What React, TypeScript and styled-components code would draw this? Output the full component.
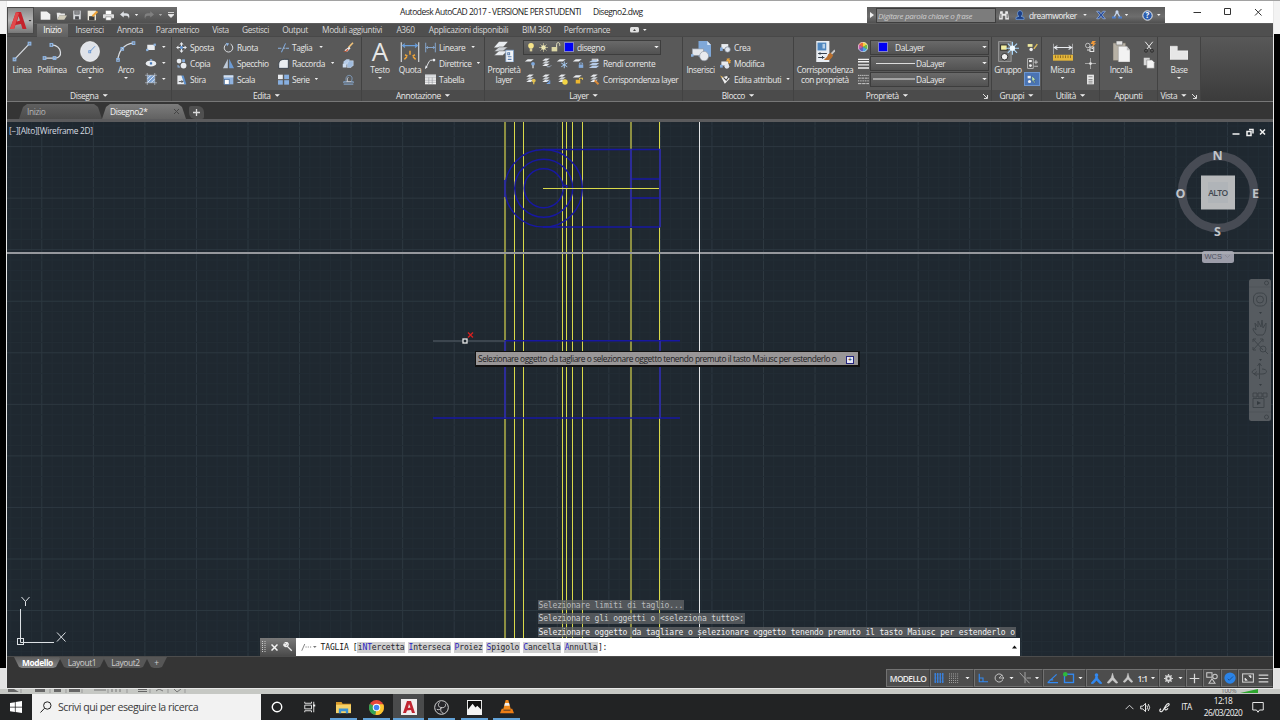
import React from 'react';
import styled, { createGlobalStyle } from 'styled-components';

const UI = '"Open Sans", "Noto Sans", sans-serif';
const MONO = '"DejaVu Sans Mono", "Liberation Mono", monospace';

const GlobalStyle = createGlobalStyle`
  * { box-sizing: border-box; }
  html, body { margin: 0; padding: 0; background: #000; overflow: hidden; }
  body { font-family: ${UI}; font-size: 8.400px; letter-spacing: -0.400px; color: #e8e8e8; }
  svg { display: block; flex: none; }
`;

/* ---------- icons, all on a 16 unit grid ---------- */

const W = '#e9ecf0';
const B = '#8db4e2';
const Y = '#e3c14f';

const layerStack = (
  <>
    <path d="M3 5 7 2h6L9 5z" fill={W} />
    <path d="M3 8.5 7 5.5h6L9 8.5z" fill="#cfd4da" />
    <path d="M3 12 7 9h6L9 12z" fill={W} />
  </>
);

const icons: Record<string, React.ReactNode> = {
  line: <><path d="M2 14 14 2" stroke="#d9dde2" strokeWidth="1" /><g fill="none" stroke={B}><rect x="1" y="13" width="2" height="2" /><rect x="13" y="1" width="2" height="2" /></g></>,
  polyline: <><path d="M2 13h9c5.500 0 5.500-9-3-10" stroke="#d9dde2" fill="none" /><g fill="none" stroke={B}><rect x="1" y="12" width="2" height="2" /><rect x="9" y="12" width="2" height="2" /><rect x="6.500" y="2" width="2" height="2" /></g></>,
  circle: <><circle cx="8" cy="8" r="7.6" fill="#dfe2e8" stroke="#fff" strokeWidth=".5" /><path d="m8 8 4-4" stroke="#5b8fd0" strokeWidth=".7" /><rect x="7" y="7.4" width="1.6" height="1.6" fill="none" stroke="#5b8fd0" strokeWidth=".6" /></>,
  arc: <><path d="M1.5 14.5C2 8 6 2.500 14 1.500" stroke="#d9dde2" fill="none" /><g fill="none" stroke={B} strokeWidth=".9"><rect x=".6" y="13.400" width="2" height="2" /><rect x="4" y="5" width="2" height="2" /><rect x="13" y=".6" width="2" height="2" /></g></>,
  rect: <><rect x="3" y="5" width="10" height="7" fill={W} /><rect x="1.500" y="10.500" width="3" height="3" fill={B} /><rect x="11.500" y="3.500" width="3" height="3" fill={B} /></>,
  ellipse: <><ellipse cx="8" cy="8.500" rx="7" ry="4" fill={W} /><rect x="6.500" y="7" width="3" height="3" fill="#4377b8" /><rect x="6.500" y="3" width="3" height="2" fill={B} /></>,
  hatch: <><rect x="3" y="3" width="10" height="10" fill="#7ba1d2" /><path d="M3 8l5-5M3 13 13 3M8 13l5-5" stroke="#fff" /><path d="M3 0v16M13 0v16M0 3h16M0 13h16" stroke="#c5cedb" strokeWidth=".8" /></>,
  move: <><path d="M8 1v14M1 8h14" stroke={W} strokeWidth="1.600" /><path d="m5 3.500 3-3 3 3M5 12.500l3 3 3-3M3.500 5l-3 3 3 3M12.500 5l3 3-3 3" fill={W} /><rect x="6" y="6" width="4" height="4" fill="#5f92cf" /></>,
  rotate: <><path d="M5 3a6.200 6.200 0 1 0 6 0" fill="none" stroke={W} strokeWidth="1.300" /><path d="m4 1 5 1-3 4z" fill={B} /></>,
  trim: <><path d="M0 9h5M11 9h5" stroke={B} strokeWidth="1.500" /><path d="M5 15 11 2" stroke="#7fa9dd" strokeWidth="1.500" /><path d="M8 9h2" stroke={W} /></>,
  copy: <><circle cx="4.500" cy="4.500" r="3.500" fill={W} /><circle cx="11" cy="11" r="4.200" fill={W} /><rect x="9" y="2" width="4" height="4" fill={B} /><path d="M3 10v3h3" stroke={B} fill="none" strokeWidth="1.500" /></>,
  mirror: <><path d="M7 1v14H0z" fill="#bfcad8" /><path d="M9 1v14h7z" fill="#6d9bd3" /></>,
  fillet: <path d="M1 15V9c0-5 4-7 8-7h6v13z" fill={W} stroke="#1e2a38" />,
  stretch: <><path d="M2 2h6l6 13H2z" fill={W} /><path d="M8 2h3l4 13h-3z" fill="#5f92cf" /><path d="M4 11h6M8 9l2 2-2 2" stroke="#222" fill="none" /></>,
  scale: <><rect x="1" y="2" width="14" height="13" fill="#8fb2df" /><rect x="1" y="2" width="14" height="3" fill="#d5dfec" /><rect x="2" y="8" width="7" height="7" fill="#fff" stroke="#456a9a" /></>,
  array: <><rect x="0" y="1" width="7" height="6.500" fill={W} /><rect x="9" y="1" width="7" height="6.500" fill="#87afe0" /><rect x="0" y="9" width="7" height="6.500" fill="#87afe0" /><rect x="9" y="9" width="7" height="6.500" fill="#87afe0" /></>,
  erase: <><path d="M14.500 1 8 8" stroke="#efc27b" strokeWidth="2.400" /><path d="M9 7 2 12l4 2 5-5z" fill="#e8e8e8" /><path d="M6 10c-1 3-3 4-6 4 3 1 7 0 8-3z" fill="#d2502a" /></>,
  explode: <><path d="M2 6 6 3h4v4L7 10H2z" fill="#b6cbe6" /><path d="M7 8l3-3h5v6l-3 3H7z" fill="#9fbbdd" stroke="#dfe9f5" strokeWidth=".6" /><path d="M1 9h5v5H1z" fill="#cddcf0" /></>,
  offset: <><path d="M1 13V11h4C3 5 6 2 9 2s6 3 3 9h3v2z" fill="none" stroke={B} /><path d="M5 11h7M8 5c-2 0-2 3-1 6" stroke={W} fill="none" /><path d="M1 15h14" stroke={B} /></>,
  dimension: <><path d="M1 1v15M15 1v15" stroke={W} strokeWidth=".8" /><path d="M2 3.500h12M4 2 2 3.500 4 5M12 2l2 1.500L12 5" stroke="#6a9edb" fill="none" strokeWidth=".9" /><path d="M8 7.500v3M3.500 14l2-2M12.500 14l-2-2M4 10.500l2 1M12 10.500l-2 1" stroke="#f0a53a" strokeWidth="1.200" /></>,
  linear: <><path d="M1 1v14M15 1v14" stroke={B} strokeWidth="1.200" /><path d="M2 8h12M4 6 2 8l2 2M12 6l2 2-2 2" stroke={B} fill="none" strokeWidth="1.200" /></>,
  leader: <><path d="M1 15 6 5q1-2 5-2" stroke={W} strokeWidth="1.300" fill="none" /><path d="m0 16 1-5 3 2z" fill={W} /><circle cx="13" cy="3" r="2" fill={W} /></>,
  table: <><rect x="0" y="1" width="16" height="14" fill="#f4f4f4" /><path d="M0 5.500h16M0 9h16M0 12h16M5.500 5v10M10.500 5v10" stroke="#8b8f94" strokeWidth=".8" /><path d="M0 1h16v3H0z" fill="#d4d7da" /></>,
  layerProps: <><path d="M0 5 4 .5h7L7 5z" fill={W} /><path d="M0 8 4 4.500h7L7 8z" fill="#cdd1d6" stroke="#555" strokeWidth=".4" /><path d="M0 11 4 7.500h7L7 11z" fill={W} stroke="#555" strokeWidth=".4" /><rect x="9.500" y="7" width="6" height="9" fill="#f3f5f8" stroke="#7da0cc" strokeWidth=".6" /><path d="M11 9h1.500v1.500H11zM11 12h3M11 14h3" stroke="#5c80b0" strokeWidth=".8" fill="none" /></>,
  layOff: <><path d="M1 6 5 3h8L9 6z" fill={W} /><circle cx="12" cy="9" r="2.500" fill="#7fa9dd" /><path d="M12 11v4" stroke={W} strokeWidth="1.500" /></>,
  layIso: <>{layerStack}<path d="M9 13h4l2-2" stroke="#b2c5e0" fill="none" /></>,
  layFreeze: <><path d="M1 6 5 3h8L9 6z" fill={W} /><path d="M11 6v9M7 8l8 5M15 8l-8 5" stroke="#a8cdf4" strokeWidth="1.300" /></>,
  layLock: <><path d="M1 6 5 3h8L9 6z" fill={W} /><rect x="9" y="10" width="6" height="4.500" fill="#84abdc" /><path d="M10 10V8h4v2" fill="none" stroke={B} /></>,
  layCurrent: <><path d="M1 7 6 4h9l-4 3zM1 11l5-3h9l-4 3zM1 14.500l5-3h9l-4 3z" fill="#b5cbe8" /><path d="M5 3h8v3" stroke={W} fill="none" strokeWidth="1.500" /></>,
  layOn: <>{layerStack}<circle cx="13" cy="10" r="2.500" fill={Y} /><path d="M13 12v3" stroke={Y} strokeWidth="1.600" /></>,
  layUniso: <>{layerStack}<path d="M9 10l4 4M13 10v4H9" stroke="#78a8e6" strokeWidth="1.300" fill="none" /></>,
  layThaw: <>{layerStack}<circle cx="12" cy="12" r="3.600" fill="#f2d444" /></>,
  layUnlock: <><path d="M1 6 5 3h8L9 6z" fill={W} /><rect x="5" y="9" width="6" height="5" fill="#edb72f" /><path d="M10 9V7h4v2" fill="none" stroke={Y} strokeWidth="1.400" /></>,
  layMatch: <>{layerStack}<path d="m9 10 5 5" stroke="#d98938" strokeWidth="2.600" /></>,
  bulb: <><circle cx="8" cy="6" r="4.500" fill="#f8e58a" /><path d="M6 10h4v5H6z" fill="#d9cf9b" /></>,
  sun: <><circle cx="8" cy="8" r="4" fill="#fbf5c5" /><path d="M8 0v16M0 8h16M2.500 2.500l11 11M13.500 2.500l-11 11" stroke="#e6dfa9" strokeWidth="1" /></>,
  unlock: <><rect x="1" y="8" width="9" height="7" fill="#dcd6a4" /><path d="M9 8V4c0-4 5-4 5 0v2" fill="none" stroke="#e9e6c4" strokeWidth="1.600" /></>,
  insert: <><path d="M6 0h7l3 3v9H6z" fill="#7fa8d9" /><path d="M13 0v3h3" fill="#d8e5f5" /><rect x="1" y="6" width="9" height="5" fill="#e4e7ec" stroke="#8b93a0" strokeWidth=".5" /><circle cx="10.500" cy="11.500" r="3.600" fill="#e8eaee" stroke="#8b93a0" strokeWidth=".5" /><rect x="0" y="10" width="2" height="2" fill={B} /></>,
  create: <><rect x="2" y="3" width="10" height="7" fill={W} /><circle cx="11" cy="11" r="4" fill="#dfe5ee" stroke="#757e8b" /><rect x="0" y="8" width="4" height="5" fill="#82a9da" /></>,
  modify: <><rect x="2" y="5" width="10" height="6" fill={W} /><circle cx="10" cy="12" r="3.500" fill="#dfe5ee" /><path d="M13 0v8M9 4h7M10 1l5 6" stroke="#f1a83c" strokeWidth="1.500" /><rect x="0" y="10" width="4" height="4" fill="#82a9da" /></>,
  attributes: <><path d="m2 5 5 9 7-7-4-4z" fill="#efefef" /><path d="m5 5 4 4 5-7" stroke="#444" strokeWidth="1.500" fill="none" /><path d="m0 2 4 2-1 2z" fill="#e6b34c" /></>,
  match: <><rect x="1" y="0" width="10.500" height="16" fill="#e9edf2" /><rect x="2" y="1.200" width="7" height="6" fill="#4f87bf" /><rect x="6" y="2.200" width="2" height="3.500" fill="#b9d2ea" /><path d="M2.500 9.500h7M2.500 12.500h5M4 8.500v2M6 11.500v2" stroke="#39424d" strokeWidth=".8" /><path d="m16 7-4 4" stroke="#c8c8c8" strokeWidth="1.500" /><path d="m12.500 9 2 2c-2 4-5 4-7.500 3 2-1 3-2 3.500-4z" fill="#b9702f" /></>,
  wheel: <><path d="M8 8V0a8 8 0 0 1 7 4z" fill="#f2d23f" /><path d="m8 8 7-4a8 8 0 0 1 0 8z" fill="#6cc04a" /><path d="m8 8 7 4a8 8 0 0 1-7 4z" fill="#4aa3df" /><path d="M8 8v8a8 8 0 0 1-7-4z" fill="#5d62c9" /><path d="M8 8 1 12a8 8 0 0 1 0-8z" fill="#c25aa5" /><path d="M8 8 1 4a8 8 0 0 1 7-4z" fill="#eb6d3b" /><circle cx="8" cy="8" r="7.600" stroke="#f2f2f2" fill="none" /></>,
  weights: <path d="M0 2h16M0 5.500h16M0 10h16M0 14.500h16" stroke="#f1f1f1" strokeWidth="2" />,
  dashes: <g stroke="#e4e4e4" strokeWidth="1.200"><path d="M0 2h16" strokeDasharray="2 1" /><path d="M0 6h16" strokeDasharray="4 1" /><path d="M0 10h16" strokeDasharray="1.500 1" /><path d="M0 14h16" strokeDasharray="5 1" /></g>,
  group: <><rect x=".5" y=".5" width="9.500" height="15" fill="#6c6c6c" stroke="#a5a5a5" strokeWidth=".6" /><rect x="2" y="3" width="5" height="4" fill="#f1eca0" stroke="#222" strokeWidth=".7" /><circle cx="5" cy="12" r="2.500" fill="#f0f0f0" stroke="#222" strokeWidth=".7" /><path d="M11 .5v10M6 5.500h10M7.500 2l7 7M14.500 2l-7 7" stroke="#a9d7fb" strokeWidth=".9" /><circle cx="11" cy="5.500" r="2" fill="#f3fbff" /></>,
  groupEdit: <><rect x="1" y="3" width="7" height="4" fill="#f1eca0" /><circle cx="6" cy="11" r="2.500" fill="#eee" /><path d="m15 3-5 7" stroke="#e0be58" strokeWidth="2" /></>,
  groupAdd: <><rect x="1" y="1" width="8" height="14" fill="none" stroke="#ddd" /><rect x="3" y="3" width="4" height="3" fill="#f4f4f4" /><circle cx="5" cy="11" r="2" fill="#f4f4f4" /><path d="M13 3v6M10.500 6H16M10.500 12H16" stroke="#eee" /></>,
  groupSel: <><path d="M1 3h5v4H1z" fill="#eee" /><circle cx="4" cy="12" r="2.500" fill="#eee" /><path d="m8 3 6 6-3 .5 2 4-1.500.8-2-4L8 12z" fill="#bfe4b4" stroke="#28415f" strokeWidth=".6" /></>,
  measure: <><path d="M0 2v8M16 2v8" stroke={W} strokeWidth=".8" /><path d="M1 5h14M3.500 3.500 1 5l2.500 1.500M12.500 3.500 15 5l-2.500 1.500" stroke={W} fill="none" strokeWidth=".8" /><rect x="0" y="10.500" width="16" height="4.500" fill="#e4b63b" /><path d="M2 11v2M4 11v2M6 11v2M8 11v2M10 11v2M12 11v2M14 11v2" stroke="#79591b" strokeWidth=".6" /></>,
  quick: <><circle cx="5" cy="6" r="3" fill="none" stroke="#ddd" /><path d="M9 0 7 4h3L8 9l6-6h-3l3-3z" fill="#f19a3b" transform="translate(2 0)" /><path d="M8 8h5v6H8zM4 12h4M10 10h2" stroke="#e5e5e5" fill="none" strokeWidth="1.400" /></>,
  point: <><path d="M8 0v16M0 8h16" stroke="#c5c5c5" /><circle cx="8" cy="8" r="2" fill="#e5e5e5" /></>,
  calc: <><rect x="3" y="1" width="10" height="14" fill="#e8e8e8" /><path d="M5 4h6M5 8h6M5 10.500h6M5 13h6" stroke="#666" /></>,
  paste: <><rect x="0" y="1.500" width="12" height="13.500" fill="#b7b1a5" stroke="#6b665d" strokeWidth=".5" /><path d="M3 0h6v3H3z" fill="#e6e6e6" stroke="#555" strokeWidth=".4" /><path d="M5 4h8l3 3v9H5z" fill="#f2f2f2" stroke="#8a8a8a" strokeWidth=".4" /><path d="M13 4v3h3" fill="#c0c0c0" /></>,
  cut: <><path d="m3 1 8 10M13 1 5 11" stroke="#eee" strokeWidth="1.300" /><circle cx="4" cy="13" r="2" fill="none" stroke="#222" /><circle cx="12" cy="13" r="2" fill="none" stroke="#222" /></>,
  copyClip: <><path d="M1 1h8v10H1z" fill="#d8d8d8" /><path d="M5 4h7l3 3v8H5z" fill="#f4f4f4" stroke="#777" strokeWidth=".7" /></>,
  base: <path d="M0 4h6.500v3.500H16V14H0z" fill="#e6e6e6" stroke="#fafafa" strokeWidth=".4" />,
  newFile: <path d="M1 2h9l5 4v8H1z" fill="#f2f2f2" />,
  open: <><path d="M1 4h5l1 1h6v3H5l-3 6z" fill="#e8e8e8" /><path d="M5 8h11l-4 6H2z" fill="#d1cdbb" /></>,
  save: <><path d="M2 1h12v14H2z" fill="#d6d8dc" /><path d="M4 1h8v6H4zM5 10h6v5H5z" fill="#4a4c50" /><path d="M5 3h6M5 5h6" stroke="#eee" /></>,
  saveAs: <><path d="M1 1h12v14H1z" fill="#f0ecdf" /><path d="M3 9h8v6H3z" fill="#3c3c3c" /><path d="m15 2-7 7" stroke="#f0a63a" strokeWidth="3" /></>,
  print: <><path d="M4 1h8v5H4z" fill="#fff" /><rect x="0" y="6" width="16" height="6" rx="1" fill="#dfdfdf" /><path d="M4 10h8v5H4z" fill="#fff" stroke="#555" strokeWidth=".7" /></>,
  undo: <path d="M0 7 6 2v3h4c5 0 6 5 4 9 0-4-2-5-4-5H6v3z" fill="#dcdfe4" />,
  redo: <path d="m16 7-6-5v3H6C1 5 0 10 2 14c0-4 2-5 4-5h4v3z" fill="#808080" />,
  binoculars: <><path d="M2 2h4v4h4V2h4l2 13h-6V9H6v6H0z" fill="#ececec" /><path d="M3 6v7M13 6v7" stroke="#555" strokeWidth="1.500" /></>,
  user: <path d="M8 1c5 0 5 8 1.500 9l5 2v3h-13v-3l5-2C3 9 3 1 8 1z" fill="#1c3f86" stroke="#7db0f2" />,
  exchange: <path d="M1 2h4l3 4 3-4h4l-5 6 5 6h-4l-3-4-3 4H1l5-6z" fill="#274c9c" stroke="#a6c3ee" />,
  a360: <><path d="M8 3 3 12M8 3l5 9" stroke="#c8d8f0" strokeWidth="2" /><circle cx="8" cy="3" r="2.500" fill="#c8d8f0" /><path d="M0 12h6M10 12h6" stroke="#4d80cf" strokeWidth="3" /></>,
  chevron: <path d="m1 11 7-7 7 7" fill="none" stroke="#eee" strokeWidth="1.500" />,
  speaker: <path d="M1 6h3l4-4v12l-4-4H1zM10 5q2 3 0 6M12 3q4 5 0 10" fill="none" stroke="#eee" strokeWidth="1.400" />,
  pen: <path d="M3 10c-3 1-2 5 1 4s4-8 8-11c3-2 4 1 1 3S7 9 9 11s4-2 4-2" fill="none" stroke="#eee" strokeWidth="1.600" />,
  notice: <path d="M1 2h14v10h-5l-2 3-2-3H1z" fill="none" stroke="#eee" strokeWidth="1.300" />,
  win: <path d="m0 2.500 6.500-1V7.500H0zM7.500 1.300 16 0v7.500H7.500zM0 8.500h6.500v6l-6.500-1zM7.500 8.500H16V16l-8.500-1.300z" fill="#fff" />,
  cortana: <circle cx="8" cy="8" r="6.300" fill="none" stroke="#fff" strokeWidth="1.900" />,
  taskview: <g fill="none" stroke="#f0f0f0" strokeWidth="1.200"><path d="M1 1v2h9V1M1 15v-2h9v2M1 5.500h9v5H1zM13 1v14" /><path d="M12 6h3" strokeWidth="2.500" /></g>,
  explorer: <><path d="M0 2h6l1 2h9v3H0z" fill="#d99a2b" /><path d="M0 5h16v9H0z" fill="#f6d268" /><path d="M3 9h10v5h-2.500v-2h-5v2H3z" fill="#3d93d4" /></>,
  chrome: <><circle cx="8" cy="8" r="8" fill="#e8483b" /><path d="M8 8 1 4a8 8 0 0 0 6 12z" fill="#33a553" /><path d="M8 8h8a8 8 0 0 1-9 8z" fill="#fbc62f" /><path d="M8 4.500h7.200A8 8 0 0 1 16 8l-5 2z" fill="#fbc62f" /><circle cx="8" cy="8" r="4" fill="#fff" /><circle cx="8" cy="8" r="3" fill="#4384f3" /></>,
  autocad: <><rect x="0" y="0" width="16" height="16" fill="#f1eeee" /><path d="M2 14 6 2h4l4 12h-3l-1-3-4 .5L5 14zM7 9l2.500-.5L8 5z" fill="#c02430" /></>,
  obs: <><circle cx="8" cy="8" r="7.300" fill="#26262a" stroke="#ddd" /><path d="M8 8C4 8 4 4 6 2.500M8 8c4 1 5-3 4-4M8 8c-2 3 0 6 2 6M3 10c2 1 4 0 5-2" stroke="#d4d4d4" fill="none" /></>,
  photos: <><rect width="16" height="16" fill="#f4f4f4" /><path d="M1 1h14v9l-4-4-2 2-3-4-5 6z" fill="#111" /></>,
  vlc: <><path d="M6.500 0h3l3 11h-9z" fill="#f28a1c" /><path d="M5.700 3.500h4.600l.8 3H4.900z" fill="#eee" /><path d="m2 10-2 5h16l-2-5h-2v2H4v-2z" fill="#ee7d14" /></>,
  grid: <><path d="M2 0v16M6 0v16M10 0v16M14 0v16" stroke="#3a86e8" strokeWidth="2" /><path d="M0 2h16M0 8h16M0 14h16" stroke="#3a86e8" strokeWidth=".8" opacity=".6" /></>,
  snap: <g stroke="#bcbcbc" strokeWidth="1.400" strokeDasharray="1.400 1.900"><path d="M0 1.500h16M0 5h16M0 8.500h16M0 12h16M0 15.300h16" /></g>,
  ortho: <path d="M2 1v13h14M2 8h6v6" fill="none" stroke="#3389f0" strokeWidth="1.800" />,
  polar: <><path d="M14 5a6.500 6.500 0 1 0 0 6" fill="none" stroke="#c9c9c9" strokeWidth="1.500" /><path d="M8 8h8M8 8l5-5M13 5.500 16 8l-3 2.500" fill="none" stroke="#c9c9c9" strokeWidth="1.300" /></>,
  iso: <path d="M1 1l13 14M8 0v15M10 8h6" fill="none" stroke="#a4a4a4" strokeWidth="1.300" />,
  track: <path d="M1 14 14 2M1 14h15M4 10h5" fill="none" stroke="#3389f0" strokeWidth="1.700" />,
  osnap: <><rect x="2" y="3" width="12" height="11" fill="none" stroke="#3389f0" strokeWidth="1.800" /><circle cx="3" cy="3" r="3" fill="#2dba3b" /></>,
  annoB: <><circle cx="8" cy="3" r="2.600" fill="#3389f0" /><path d="M8 2 6 8 0 15l3 .5 5-5 5 5 3-.5-6-7z" fill="#3389f0" stroke="#3389f0" /></>,
  anno: <path d="M8 0 6 7 0 14l3 1 5-5 5 5 3-1-6-7z" fill="#c8c8c8" stroke="#c8c8c8" strokeWidth=".6" />,
  gear: <><circle cx="8" cy="8" r="4" fill="none" stroke="#d4d4d4" strokeWidth="3.500" /><path d="M8 0v3M8 13v3M0 8h3M13 8h3M2.500 2.500l2 2M11.500 11.500l2 2M13.500 2.500l-2 2M2.500 13.500l2-2" stroke="#d4d4d4" strokeWidth="2.200" /></>,
  plus: <path d="M8 1v14M1 8h14" stroke="#d9d9d9" strokeWidth="1.800" />,
  isolate: <g fill="none" stroke="#c9c9c9" strokeWidth="1.400"><rect x="1" y="1" width="7" height="6" /><circle cx="12" cy="6" r="3" /><path d="m8 9 4 6H4z" /></g>,
  hardware: <><circle cx="8" cy="8" r="7.500" fill="#2b83e6" /><path d="m5 9 2 2 5-5" stroke="#174f94" strokeWidth="1.300" fill="none" /></>,
  clean: <><rect x=".8" y="2.500" width="14.400" height="11" fill="none" stroke="#d0d0d0" strokeWidth="1.400" /><path d="M4 11v-3l3 3zM12 5v3L9 5z" fill="#e0e0e0" stroke="#e0e0e0" /></>,
  menu: <path d="M1 3h14M1 8h14M1 13h14" stroke="#d6d6d6" strokeWidth="1.800" />,
  wrench: <path d="m14 14-7-7M2 3l2 2 2-2-2-2c3-1 5 2 4 4L6 7C3 8 0 5 2 3z" fill="none" stroke="#eee" strokeWidth="2.200" />,
  prompt: <path d="m1 13 4-9M6 8h1.500M9 8h1.500M12 8h1.500" stroke="#777" fill="none" strokeWidth="1.200" />,
};

const Icon = ({ name, size = 12, h }: { name: string; size?: number; h?: number }) => (
  <svg width={size} height={h ?? size} viewBox="0 0 16 16" preserveAspectRatio={h ? 'none' : 'xMidYMid meet'}>{icons[name]}</svg>
);

const Caret = styled.i<{ $m?: string; $s?: number; $c?: string }>`
  width: ${(p) => (p.$s ?? 2.2) * 2}px;
  height: ${(p) => p.$s ?? 2.2}px;
  flex: none;
  margin: ${(p) => p.$m ?? '0'};
  background: ${(p) => p.$c ?? '#f0f0f0'};
  clip-path: polygon(0 0, 100% 0, 50% 100%);
`;

/* ---------- frame ---------- */

const Desktop = styled.div`
  width: 1280px;
  height: 720px;
  display: flex;
  flex-direction: column;
  overflow: hidden;
  background: #000;
`;
const TopEdge = styled.div`height: 1px; flex: none; background: #a2a2a2;`;
const Middle = styled.div`height: 688px; flex: none; display: flex;`;
const Gutter = styled.div`
  width: 6px;
  background: linear-gradient(#f3f3f3 0 33px, #000 33px 667px, #e3e3e3 667px);
`;
const Window = styled.div`
  position: relative;
  width: 1268px;
  display: flex;
  flex-direction: column;
  border: solid #e8e8e8;
  border-width: 0 1px 1px 1px;
  background: #353535;
`;

/* ---------- title bar ---------- */

const TitleBar = styled.div`
  height: 22px;
  flex: none;
  display: flex;
  align-items: flex-end;
  background: #fff;
`;
const AppButton = styled.div`
  position: absolute;
  left: 0;
  top: 6px;
  width: 27px;
  height: 27px;
  display: flex;
  align-items: center;
  padding-left: 2px;
  border: 1px solid #4a4a4a;
  background: linear-gradient(#8a8a8a, #b5b5b5 50%, #777);
`;
const QuickBar = styled.div`
  width: 170px;
  height: 16px;
  padding-left: 32px;
  display: flex;
  align-items: center;
  background: linear-gradient(#6d6d6d, #505050);
`;
const QuickItem = styled.div<{ $w: number }>`
  width: ${(p) => p.$w}px;
  flex: none;
  display: flex;
  justify-content: center;
`;
const Title = styled.div`
  width: 690px;
  height: 22px;
  padding-left: 223px;
  display: flex;
  gap: 12px;
  line-height: 21px;
  font-size: 8.500px;
  letter-spacing: -0.490px;
  color: #1b1b1b;
  white-space: nowrap;
`;
const InfoBar = styled.div`
  width: 298px;
  height: 16px;
  display: flex;
  align-items: center;
  background: linear-gradient(#5c5c5c, #6d6d6d 60%, #505050);
`;
const InfoArrow = styled.div`
  width: 9px;
  display: flex;
  justify-content: center;
`;
const Search = styled.div`
  width: 120px;
  height: 15px;
  padding-left: 1px;
  line-height: 13px;
  border: 1px solid #3e3e3e;
  background: #7c7c7c;
  color: #cfcfcf;
  font-size: 8px;
  letter-spacing: -0.330px;
  font-style: italic;
  white-space: nowrap;
  overflow: hidden;
`;
const InfoUser = styled.div`width: 53px; color: #f0f0f0; letter-spacing: -0.500px;`;
const WindowButtons = styled.svg`margin-left: auto;`;

/* ---------- ribbon ---------- */

const TabRow = styled.div`
  height: 14px;
  flex: none;
  display: flex;
  padding-left: 30px;
  background: #4f4f4f;
  border-top: 1px solid #5e5e5e;
  border-bottom: 1px solid #484848;
`;
const RibbonTab = styled.div<{ $w: number; $on?: boolean }>`
  width: ${(p) => p.$w}px;
  height: 13px;
  line-height: 12px;
  text-align: center;
  white-space: nowrap;
  color: ${(p) => (p.$on ? '#fff' : '#d8d8d8')};
  background: ${(p) => (p.$on ? 'linear-gradient(#757575, #606060)' : 'none')};
`;
const RibbonToggle = styled.div`
  display: flex;
  align-items: center;
  margin-left: 13px;
`;
const Ribbon = styled.div`
  height: 65px;
  flex: none;
  display: flex;
  background: linear-gradient(#585858, #3b3b3b);
  border-bottom: 1px solid #777;
`;
const PanelBox = styled.div<{ $w: number }>`
  width: ${(p) => p.$w}px;
  flex: none;
  display: flex;
  flex-direction: column;
  background: #595959;
  border-right: 1px solid #424242;
`;
const PanelBody = styled.div<{ $pl?: number }>`
  height: 53px;
  display: flex;
  padding: 2px 0 0 ${(p) => p.$pl ?? 0}px;
`;
const PanelTitle = styled.div<{ $pr: number }>`
  position: relative;
  height: 11px;
  padding-right: ${(p) => p.$pr}px;
  display: flex;
  align-items: center;
  justify-content: center;
  gap: 4px;
  background: #4b4b4b;
  line-height: 11px;
  white-space: nowrap;
`;
const Launcher = styled.svg`
  position: absolute;
  right: 3px;
  top: 4px;
`;
const BigBox = styled.div<{ $w: number }>`
  width: ${(p) => p.$w}px;
  flex: none;
  display: flex;
  flex-direction: column;
  align-items: center;
  padding-top: 2px;
`;
const BigLabel = styled.div`
  margin-top: 3px;
  line-height: 10px;
  text-align: center;
  white-space: pre;
`;
const LetterA = styled.div`
  height: 21px;
  line-height: 21px;
  font-size: 26px;
  letter-spacing: 0;
  color: #e6e6e6;
`;
const Column = styled.div<{ $w?: number }>`
  ${(p) => (p.$w ? `width: ${p.$w}px;` : '')}
  flex: none;
  display: flex;
  flex-direction: column;
`;
const Row = styled.div<{ $gap?: number }>`
  height: 16px;
  display: flex;
  align-items: center;
  gap: ${(p) => p.$gap ?? 2}px;
  white-space: nowrap;
`;
const IconSlot = styled.div<{ $w?: number; $on?: boolean }>`
  width: ${(p) => p.$w ?? 14}px;
  height: 14px;
  flex: none;
  display: flex;
  align-items: center;
  justify-content: center;
  background: ${(p) => (p.$on ? '#4a74b4' : 'none')};
  outline: ${(p) => (p.$on ? '1px solid #6d96d0' : 'none')};
  outline-offset: -1px;
`;
const Select = styled.div<{ $w: number }>`
  width: ${(p) => p.$w}px;
  height: 15px;
  display: flex;
  align-items: center;
  padding: 0 1px 0 2px;
  border: 1px solid #3d3d3d;
  background: linear-gradient(#696969, #525252);
  white-space: nowrap;
`;
const Swatch = styled.span<{ $m: string }>`
  width: 10px;
  height: 10px;
  margin: ${(p) => p.$m};
  background: #0000f4;
  border: 1px solid #8484c8;
`;
const LinePreview = styled.span<{ $w: number; $h: number; $m: number; $c: string }>`
  width: ${(p) => p.$w}px;
  height: ${(p) => p.$h}px;
  margin: 0 1px 0 ${(p) => p.$m}px;
  background: ${(p) => p.$c};
`;

const Panel = ({ w, title, pl, caret = true, launcher, children }: { w: number; title: string; pl?: number; caret?: boolean; launcher?: boolean; children: React.ReactNode }) => (
  <PanelBox $w={w}>
    <PanelBody $pl={pl}>{children}</PanelBody>
    <PanelTitle $pr={launcher ? 11 : 0}>
      {title}
      {caret && <Caret $s={2.7} />}
      {launcher && <Launcher width="5" height="5" viewBox="0 0 5 5"><path d="M0 0l4 4M4.500 1v3.500H1" stroke="#ddd" fill="none" /></Launcher>}
    </PanelTitle>
  </PanelBox>
);

const Big = ({ w, icon, label, caret, size = 20 }: { w: number; icon: string; label: string; caret?: boolean; size?: number }) => (
  <BigBox $w={w}>
    {icon === 'text' ? <LetterA>A</LetterA> : <Icon name={icon} size={size} h={21} />}
    <BigLabel>{label}</BigLabel>
    {caret && <Caret $m="2px 0 0 0" $s={2} />}
  </BigBox>
);

const Tool = ({ icon, label, caret, size = 11 }: { icon: string; label?: string; caret?: string; size?: number }) => (
  <Row>
    <IconSlot><Icon name={icon} size={size} /></IconSlot>
    {label && <span>{label}</span>}
    {caret && <Caret $m={caret} $s={1.8} />}
  </Row>
);

/* ---------- document tabs ---------- */

const DocTabs = styled.div`
  height: 20px;
  flex: none;
  display: flex;
  align-items: flex-end;
  padding-left: 12px;
  background: #353535;
  border-bottom: 3px solid #5b5b5d;
`;
const DocTab = styled.div<{ $w: number; $on?: boolean }>`
  width: ${(p) => p.$w}px;
  height: 15px;
  padding: 0 7px 0 8px;
  display: flex;
  align-items: center;
  justify-content: space-between;
  clip-path: polygon(0 100%, 4px 3px, 8px 0, calc(100% - 8px) 0, calc(100% - 4px) 3px, 100% 100%);
  background: ${(p) => (p.$on ? 'linear-gradient(#7c7c7c, #626262)' : 'linear-gradient(#5f5f5f, #4c4c4c)')};
  color: ${(p) => (p.$on ? '#f4f4f4' : '#b5b5b5')};
`;
const PlusTab = styled.div`
  width: 15px;
  height: 13px;
  margin-left: 3px;
  display: flex;
  align-items: center;
  justify-content: center;
  border-radius: 2px 6px 2px 6px;
  background: #505050;
`;

/* ---------- viewport ---------- */

const Viewport = styled.div`
  position: relative;
  height: 534px;
  flex: none;
  overflow: hidden;
  background: #1f2830;
`;
const ViewLabel = styled.div`
  position: absolute;
  left: 2px;
  top: 3px;
  line-height: 12px;
  font-size: 8.400px;
  letter-spacing: -0.320px;
  color: #d6dbe0;
  white-space: pre;
`;
const Tooltip = styled.div`
  position: absolute;
  left: 468px;
  top: 229px;
  width: 385px;
  height: 16px;
  padding: 0 4px 0 2px;
  display: flex;
  align-items: center;
  justify-content: space-between;
  border: 1px solid #111;
  border-right-width: 2px;
  border-bottom-width: 2px;
  background: #999697;
  color: #1d1d1f;
  letter-spacing: -0.430px;
  white-space: nowrap;
`;
const TipKey = styled.span`
  width: 8px;
  height: 8px;
  margin-top: 3px;
  border: 1px solid #23237c;
  background: #e6e6f4;
  font-size: 7px;
  letter-spacing: 0;
  line-height: 5px;
  text-align: center;
  color: #111;
`;
const History = styled.div`
  position: absolute;
  left: 530.500px;
  top: 478px;
  display: flex;
  flex-direction: column;
  align-items: flex-start;
  gap: 3px;
`;
const HistoryLine = styled.div<{ $c: string }>`
  height: 10.300px;
  padding: 0 1px;
  line-height: 11px;
  background: rgba(98, 100, 103, 0.780);
  color: ${(p) => p.$c};
  font-family: ${MONO};
  font-size: 8px;
  letter-spacing: -0.146px;
  white-space: pre;
`;
const CommandBar = styled.div`
  position: absolute;
  left: 253px;
  top: 516px;
  width: 760px;
  height: 18px;
  display: flex;
  background: #fff;
`;
const CommandGrip = styled.div`
  width: 36px;
  display: flex;
  align-items: center;
  gap: 5px;
  padding-left: 2px;
  background: linear-gradient(#7a7a7a, #4a4a4a);
`;
const CommandText = styled.div`
  flex: 1;
  display: flex;
  align-items: center;
  padding: 0 3px 0 5px;
  font-family: ${MONO};
  font-size: 8px;
  letter-spacing: -0.146px;
  color: #151515;
  white-space: pre;
`;
const Verb = styled.span`margin: 0 4px 0 4px;`;
const Option = styled.span`
  margin-right: 3px;
  line-height: 11px;
  padding: 0 0.500px;
  background: #cfcfcf;
  color: #26262e;
  &:last-of-type { margin-right: 0; }
  & b { font-weight: 400; color: #2a1fc4; }
`;
const Expand = styled.svg`margin-left: auto;`;

/* ---------- bottom bars ---------- */

const LayoutTabs = styled.div`
  height: 13px;
  flex: none;
  display: flex;
  padding-left: 7px;
  border-top: 1px solid #4c4c4c;
`;
const LayoutTab = styled.div<{ $w: number; $on?: boolean }>`
  width: ${(p) => p.$w}px;
  height: 11px;
  line-height: 11px;
  margin-right: -2px;
  text-align: center;
  clip-path: polygon(0 0, 100% 0, calc(100% - 5px) 90%, calc(100% - 8px) 100%, 8px 100%, 5px 90%);
  background: ${(p) => (p.$on ? 'linear-gradient(#5c5c5c, #868686)' : '#565656')};
  color: ${(p) => (p.$on ? '#fff' : '#cecece')};
  font-weight: ${(p) => (p.$on ? 700 : 400)};
`;
const StatusRow = styled.div`
  height: 18px;
  display: flex;
  justify-content: flex-end;
`;
const StatusCell = styled.div<{ $w: number }>`
  width: ${(p) => p.$w}px;
  height: 18px;
  flex: none;
  display: flex;
  align-items: center;
  background: #4d4d4d;
  border: 1px solid #727272;
  border-right-color: #3c3c3c;
  font-size: 8.400px;
  font-weight: 600;
  letter-spacing: -0.650px;
  color: #ececec;
  white-space: nowrap;
`;
const StatusItem = styled.div<{ $w: number }>`
  width: ${(p) => p.$w}px;
  display: flex;
  flex: none;
  justify-content: center;
`;
const BackStrip = styled.div`
  height: 5px;
  flex: none;
  display: flex;
  justify-content: space-between;
  overflow: hidden;
  background: #c6c8c4;
`;
const Remnant = styled.div`
  width: 59px;
  display: flex;
  gap: 4px;
  font-size: 6.500px;
  letter-spacing: -0.300px;
  line-height: 4px;
  color: #666;
`;

/* ---------- taskbar ---------- */

const Taskbar = styled.div`
  height: 26px;
  flex: none;
  display: flex;
  background: #222324;
`;
const Start = styled.div`width: 32px; display: flex; align-items: center; justify-content: center;`;
const TaskSearch = styled.div`
  width: 229px;
  display: flex;
  align-items: center;
  gap: 6px;
  padding-left: 8px;
  background: #f2f2f2;
  color: #3a3a3a;
  font-size: 10.600px;
  letter-spacing: -0.470px;
  white-space: nowrap;
`;
const TaskItem = styled.div<{ $w: number; $bar?: boolean; $on?: boolean }>`
  width: ${(p) => p.$w}px;
  display: flex;
  align-items: center;
  justify-content: center;
  background-color: ${(p) => (p.$on ? '#4a4b4c' : 'transparent')};
  background-image: ${(p) => (p.$bar ? 'linear-gradient(#62a2d8, #62a2d8)' : 'none')};
  background-size: ${(p) => (p.$on ? '100%' : '27px')} 2px;
  background-position: bottom center;
  background-repeat: no-repeat;
`;
const Tray = styled.div`
  margin-left: auto;
  width: 161px;
  display: flex;
  align-items: center;
  color: #f2f2f2;
  font-size: 8.300px;
  letter-spacing: -0.560px;
`;
const TrayItem = styled.div<{ $w: number }>`
  width: ${(p) => p.$w}px;
  display: flex;
  justify-content: center;
  text-align: center;
  line-height: 12px;
`;

/* ---------- the drawing ---------- */

const yellow = '#d9d94a';
const blue = '#1717a2';

const Drawing = () => {
  const cols = Array.from({ length: 124 }, (_, i) => i - 3);
  const rows = Array.from({ length: 54 }, (_, i) => i - 2);
  return (
    <svg width="1266" height="534" viewBox="7 122 1266 534">
      {cols.map((i) => <path key={`c${i}`} d={`M${41.8 + i * 10.31} 122v534`} stroke={i % 5 === 0 ? '#2d3840' : '#232d35'} strokeWidth="1" />)}
      {rows.map((i) => <path key={`r${i}`} d={`M7 ${146.6 + i * 10.31}h1266`} stroke={i % 5 === 0 ? '#2d3840' : '#232d35'} strokeWidth="1" />)}
      <g stroke={yellow}>
        {[514.5, 523.5, 562.5, 566.5, 572.5, 582.5, 659.5].map((x) => <path key={x} d={`M${x} 122v534`} />)}
      </g>
      <g stroke="#8d8f42" strokeWidth="2"><path d="M505 122v58M505 197v143M505 419v237M631 122v27M631 228v428" /></g>
      <g stroke={blue} fill="none" strokeWidth="1.500">
        <circle cx="543.700" cy="188.300" r="38.700" />
        <circle cx="543.700" cy="188.300" r="29" />
        <circle cx="543.700" cy="188.300" r="19.500" />
        <path d="M562 186c5-2 7 1 3 3" />
        <path d="M543 149.500h117M543 227h117M631 179h29M631 198h29M505 340.800h175M433 418h247" />
      </g>
      <g stroke="#2c2c98" strokeWidth="2"><path d="M660 149v78M660 341v77M505 341v77M631 149v78M505 180v17" /></g>
      <path d="M543 188.500h116" stroke={yellow} />
      <path d="M433 341h72" stroke="#47515a" strokeWidth="1.500" />
      <path d="M7 253h1266" stroke="#96989d" strokeWidth="2" />
      <path d="M699.500 122v534" stroke="#e4e6e8" />
      <rect x="463" y="339" width="4" height="4" fill="#1f2830" stroke="#e6e6e6" strokeWidth="1.300" />
      <path d="m468 332.500 5 5M473 332.500l-5 5" stroke="#d31f1f" strokeWidth="1.400" />

      <g stroke="#dce0e4" fill="none">
        <path d="M20.500 609v33.500h33.500" />
        <rect x="17.500" y="638.500" width="6" height="6" />
      </g>
      <path d="m57 632.500 8.500 9M65.500 632.500l-8.500 9M21.500 597l4 4.500 4-4.500M25.500 601.500v4.500" stroke="#dce0e4" fill="none" />

      <g stroke="#f2f2f2" fill="none" strokeWidth="1.500">
        <path d="M1232.500 134h7M1247 131.500h4v4h-4zM1249 129.500h4v4M1260 129.500l5 5M1265 129.500l-5 5" />
      </g>

      <circle cx="1218" cy="192" r="36" fill="none" stroke="#474b54" strokeWidth="8.500" />
      <rect x="1201" y="175.500" width="34" height="34" fill="#b7b9bb" />
      <rect x="1208" y="182" width="20" height="21" fill="#b0b4b8" />
      <g fontFamily="Open Sans" textAnchor="middle" fontWeight="700" fontSize="12.500" letterSpacing="0" fill="#c0c4c9">
        <text x="1217.500" y="160">N</text>
        <text x="1217.500" y="235.500">S</text>
        <text x="1180.500" y="197.500">O</text>
        <text x="1255.500" y="197.500">E</text>
      </g>
      <text x="1218" y="195.500" fontFamily="Open Sans" textAnchor="middle" fontSize="8.500" letterSpacing="-0.600" fontWeight="600" fill="#41474f">ALTO</text>
      <rect x="1202" y="251" width="32" height="12" rx="2.500" fill="#9c9da9" />
      <text x="1204.500" y="259" fontFamily="Liberation Sans" fontSize="7.500" letterSpacing="0" fill="#4f525e">WCS</text>
      <path d="m1225 255 2.500 2.500 2.500-2.500" fill="none" stroke="#8b8d98" />
      <path d="M1202 253h32" stroke="#a9abb3" strokeWidth="2" />

      <rect x="1249" y="279" width="22" height="142" rx="2.500" fill="#565b60" />
      <path d="M1249 287h22M1249 412h22" stroke="#4f5459" />
      <g fill="none" stroke="#3e4449">
        <circle cx="1266.500" cy="283" r="2" />
        <rect x="1253.500" y="293" width="13" height="13" rx="5" />
        <circle cx="1260" cy="299.500" r="3.500" />
        <path d="M1256 334c-5-6-3-7 0-4l-1-7 3 4v-6l3 6 1-7 1 8 3-5c0 5 0 9-3 12h-6z" />
        <path d="m1253 339 10 11M1263 339l-10 11M1253 342v-3h3M1260 339h3v3M1253 347v3h3" />
        <circle cx="1263" cy="349" r="3" /><path d="m1265 351 3 3" />
        <path d="M1259.500 363v16M1257.500 366l2-3 2 3M1262 369c6 0 6 5 0 5h-6c-6 0-4-4 0-5M1257 371.500l-3 2.500 3 2" />
        <path d="M1253 393h4v4h-4zM1258 393h4v4h-4zM1263 393h4v4h-4zM1253 398.500h11v9h-11z" />
        <circle cx="1266.500" cy="417" r="2" />
      </g>
      <path d="m1257 401 4 2-4 2zM1259 312h3l-1.500 2zM1259 359h3l-1.500 2zM1259 384h3l-1.500 2z" fill="#353b40" />
    </svg>
  );
};

const tabs: [string, number, boolean?][] = [
  ['Inizio', 31, true], ['Inserisci', 43], ['Annota', 38], ['Parametrico', 57], ['Vista', 29], ['Gestisci', 41], ['Output', 38],
  ['Moduli aggiuntivi', 76], ['A360', 31], ['Applicazioni disponibili', 95], ['BIM 360', 41], ['Performance', 60],
];

const options: [string, string, string][] = [
  ['i', 'NT', 'ercetta'], ['', 'I', 'nterseca'], ['', 'P', 'roiez'], ['', 'S', 'pigolo'], ['', 'C', 'ancella'], ['', 'A', 'nnulla'],
];

const App = () => (
  <Desktop>
    <GlobalStyle />
    <TopEdge />
    <Middle>
      <Gutter />
      <Window>
        <TitleBar>
          <QuickBar>
            <QuickItem $w={13}><Icon name="newFile" size={11} /></QuickItem>
            <QuickItem $w={18}><Icon name="open" size={11} /></QuickItem>
            <QuickItem $w={14}><Icon name="save" size={10} /></QuickItem>
            <QuickItem $w={17}><Icon name="saveAs" size={11} /></QuickItem>
            <QuickItem $w={15}><Icon name="print" size={11} /></QuickItem>
            <QuickItem $w={17}><Icon name="undo" size={10} /></QuickItem>
            <QuickItem $w={7}><Caret $s={1.8} /></QuickItem>
            <QuickItem $w={17}><Icon name="redo" size={10} /></QuickItem>
            <QuickItem $w={7}><Caret $c="#aaa" $s={1.8} /></QuickItem>
            <QuickItem $w={13}><svg width="6" height="6" viewBox="0 0 6 6"><path d="M0 .5h6M0 2.500h6L3 5.500z" fill="#eee" stroke="#eee" strokeWidth=".8" /></svg></QuickItem>
          </QuickBar>
          <Title><span>Autodesk AutoCAD 2017 - VERSIONE PER STUDENTI</span><span>Disegno2.dwg</span></Title>
          <InfoBar>
            <InfoArrow><svg width="4" height="6"><path d="M0 0v6l4-3z" fill="#f0f0f0" /></svg></InfoArrow>
            <Search>Digitare parola chiave o frase</Search>
            <QuickItem $w={16}><Icon name="binoculars" size={10} /></QuickItem>
            <QuickItem $w={16}><Icon name="user" size={10} /></QuickItem>
            <QuickItem $w={1} />
            <InfoUser>dreamworker</InfoUser>
            <QuickItem $w={6}><Caret $s={1.8} /></QuickItem>
            <QuickItem $w={25}><Icon name="exchange" size={10} /></QuickItem>
            <QuickItem $w={8}><Icon name="a360" size={10} /></QuickItem>
            <QuickItem $w={11}><Caret $s={1.8} /></QuickItem>
            <QuickItem $w={31}>
              <svg width="11" height="11" viewBox="0 0 11 11"><circle cx="5.500" cy="5.500" r="4.700" fill="#2b5cae" stroke="#eee" /><text x="5.500" y="8.300" fontSize="8" fontWeight="700" letterSpacing="0" fill="#fff" textAnchor="middle" fontFamily="Open Sans">?</text></svg>
            </QuickItem>
            <Caret $m="0 0 0 -6px" $s={1.8} />
          </InfoBar>
          <WindowButtons width="108" height="22" viewBox="1165 1 108 22"><path d="M1193.500 12.500h7.500M1224.500 8.500h6v6h-6zM1255 9l6.500 6.500M1261.500 9l-6.500 6.500" fill="none" stroke="#333" /></WindowButtons>
        </TitleBar>

        <TabRow>
          {tabs.map(([label, w, on]) => <RibbonTab key={label} $w={w} $on={on}>{label}</RibbonTab>)}
          <RibbonToggle>
            <svg width="9" height="6" viewBox="0 0 9 6"><rect width="9" height="5.500" rx="1.500" fill="#e2e2e2" /><path d="M3 4h3L4.500 2z" fill="#444" /></svg>
            <Caret $m="0 0 0 4px" $s={1.8} />
          </RibbonToggle>
        </TabRow>

        <AppButton>
          <svg width="17" height="20" viewBox="0 0 17 20"><path d="M0 18 6 1h5l5.500 17h-4L11 13l-5.500 1L4 18zM7 10.500l3-1L8.500 5z" fill="#c4232b" /><path d="M0 18 6 1l3 1-5 16z" fill="#e2494b" /></svg>
          <Caret $m="0 0 0 1px" $s={2} $c="#222" />
        </AppButton>

        <Ribbon>
          <Panel w={165} title="Disegna">
            <Big w={30} icon="line" label="Linea" />
            <Big w={30} icon="polyline" label="Polilinea" />
            <Big w={46} icon="circle" label="Cerchio" caret />
            <Big w={26} icon="arc" label="Arco" caret />
            <Column $w={32}>
              {['rect', 'ellipse', 'hatch'].map((n) => (
                <Row key={n}><IconSlot $w={24}><Icon name={n} size={12} /></IconSlot><Caret $m="0 0 0 -3px" $s={1.8} /></Row>
              ))}
            </Column>
          </Panel>

          <Panel w={190} title="Edita" pl={2}>
            <Column $w={47}><Tool icon="move" label="Sposta" /><Tool icon="copy" label="Copia" /><Tool icon="stretch" label="Stira" /></Column>
            <Column $w={55}><Tool icon="rotate" label="Ruota" /><Tool icon="mirror" label="Specchio" /><Tool icon="scale" label="Scala" /></Column>
            <Column $w={65}><Tool icon="trim" label="Taglia" caret="0 0 0 5px" /><Tool icon="fillet" label="Raccorda" caret="0 0 0 4px" /><Tool icon="array" label="Serie" caret="0 0 0 3px" /></Column>
            <Column><Tool icon="erase" /><Tool icon="explode" size={12} /><Tool icon="offset" /></Column>
          </Panel>

          <Panel w={123} title="Annotazione" pl={1}>
            <Big w={34} icon="text" label="Testo" caret />
            <Big w={26} icon="dimension" label="Quota" />
            <Column><Tool icon="linear" label="Lineare" caret="0 0 0 4px" /><Tool icon="leader" label="Direttrice" caret="0 0 0 3px" /><Tool icon="table" label="Tabella" /></Column>
          </Panel>

          <Panel w={198} title="Layer">
            <Big w={38} icon="layerProps" label={'Proprietà\nlayer'} />
            <Column>
              <Row>
                <Select $w={138}>
                  <IconSlot $w={10}><Icon name="bulb" size={10} /></IconSlot>
                  <IconSlot $w={15}><Icon name="sun" size={9} /></IconSlot>
                  <IconSlot $w={10}><Icon name="unlock" size={10} /></IconSlot>
                  <Swatch $m="0 3px 0 3px" />
                  disegno
                  <Caret $m="0 0 0 auto" $s={2.5} />
                </Select>
              </Row>
              <Row>
                {['layOff', 'layIso', 'layFreeze', 'layLock', 'layCurrent'].map((n) => <IconSlot key={n}><Icon name={n} size={12} /></IconSlot>)}
                Rendi corrente
              </Row>
              <Row>
                {['layOn', 'layUniso', 'layThaw', 'layUnlock', 'layMatch'].map((n) => <IconSlot key={n}><Icon name={n} size={12} /></IconSlot>)}
                Corrispondenza layer
              </Row>
            </Column>
          </Panel>

          <Panel w={111} title="Blocco">
            <Big w={35} icon="insert" label="Inserisci" />
            <Column><Tool icon="create" label="Crea" /><Tool icon="modify" label="Modifica" /><Tool icon="attributes" label="Edita attributi" caret="0 0 0 3px" /></Column>
          </Panel>

          <Panel w={198} title="Proprietà" launcher>
            <Big w={62} icon="match" label={'Corrispondenza\ncon proprietà'} />
            <Column>
              <Row $gap={0}>
                <IconSlot><Icon name="wheel" size={10} /></IconSlot>
                <Select $w={119}><Swatch $m="0 7px 0 5px" />DaLayer<Caret $m="0 0 0 auto" $s={2.5} /></Select>
              </Row>
              <Row $gap={0}>
                <IconSlot><Icon name="weights" size={11} /></IconSlot>
                <Select $w={119}><LinePreview $w={39} $h={1} $m={3} $c="#dcdcdc" />DaLayer<Caret $m="0 0 0 auto" $s={2.5} /></Select>
              </Row>
              <Row $gap={0}>
                <IconSlot><Icon name="dashes" size={11} /></IconSlot>
                <Select $w={119}><LinePreview $w={42} $h={2} $m={0} $c="#a3a3a3" />DaLayer<Caret $m="0 0 0 auto" $s={2.5} /></Select>
              </Row>
            </Column>
          </Panel>

          <Panel w={50} title="Gruppi">
            <Big w={32} icon="group" label="Gruppo" size={21} />
            <Column>
              <Row><IconSlot $w={16}><Icon name="groupEdit" size={11} /></IconSlot></Row>
              <Row><IconSlot $w={16}><Icon name="groupAdd" size={11} /></IconSlot></Row>
              <Row><IconSlot $w={16} $on><Icon name="groupSel" size={10} /></IconSlot></Row>
            </Column>
          </Panel>

          <Panel w={58} title="Utilità">
            <Big w={41} icon="measure" label="Misura" caret />
            <Column><Tool icon="quick" size={12} /><Tool icon="point" /><Tool icon="calc" /></Column>
          </Panel>

          <Panel w={58} title="Appunti" caret={false}>
            <Big w={42} icon="paste" label="Incolla" caret size={17} />
            <Column><Tool icon="cut" size={12} /><Tool icon="copyClip" size={12} /></Column>
          </Panel>

          <Panel w={43} title="Vista" launcher>
            <Big w={42} icon="base" label="Base" caret size={18} />
          </Panel>
        </Ribbon>

        <DocTabs>
          <DocTab $w={83}>Inizio</DocTab>
          <DocTab $w={84} $on>Disegno2*<svg width="5" height="5"><path d="M0 0l5 5M5 0 0 5" stroke="#444" /></svg></DocTab>
          <PlusTab><svg width="7" height="7"><path d="M3.500 0v7M0 3.500h7" stroke="#ddd" strokeWidth="1.300" /></svg></PlusTab>
        </DocTabs>

        <Viewport>
          <Drawing />
          <ViewLabel>[−][Alto][Wireframe 2D]</ViewLabel>
          <Tooltip>
            Selezionare oggetto da tagliare o selezionare oggetto tenendo premuto il tasto Maiusc per estenderlo o
            <TipKey>+</TipKey>
          </Tooltip>
          <History>
            <HistoryLine $c="#b9bbbe">Selezionare limiti di taglio...</HistoryLine>
            <HistoryLine $c="#d0d2d4">{'Selezionare gli oggetti o <seleziona tutto>:'}</HistoryLine>
            <HistoryLine $c="#f2f2f2">Selezionare oggetto da tagliare o selezionare oggetto tenendo premuto il tasto Maiusc per estenderlo o</HistoryLine>
          </History>
          <CommandBar>
            <CommandGrip>
              <svg width="4" height="12"><path d="M.5 0v12M3 0v12" stroke="#ccc" strokeDasharray="1 1" /></svg>
              <svg width="7" height="7"><path d="M.5.500l6 6M6.500.500l-6 6" stroke="#f4f4f4" strokeWidth="1.500" /></svg>
              <Icon name="wrench" size={10} />
            </CommandGrip>
            <CommandText>
              <Icon name="prompt" size={12} />
              <Caret $s={1.8} $c="#777" />
              <Verb>TAGLIA</Verb>
              {'['}
              {options.map(([before, key, after]) => <Option key={key}>{before}<b>{key}</b>{after}</Option>)}
              {']:'}
              <Expand width="5" height="4"><path d="M0 3.500h5L2.500.500z" fill="#111" /></Expand>
            </CommandText>
          </CommandBar>
        </Viewport>

        <LayoutTabs>
          <LayoutTab $w={47} $on>Modello</LayoutTab>
          <LayoutTab $w={46}>Layout1</LayoutTab>
          <LayoutTab $w={45}>Layout2</LayoutTab>
          <LayoutTab $w={21}>+</LayoutTab>
        </LayoutTabs>
        <StatusRow>
          <StatusCell $w={44}><StatusItem $w={42}>MODELLO</StatusItem></StatusCell>
          <StatusCell $w={44}>
            <StatusItem $w={15}><Icon name="grid" size={10} /></StatusItem><StatusItem $w={16}><Icon name="snap" size={10} /></StatusItem><StatusItem $w={11}><Caret $s={2.3} /></StatusItem>
          </StatusCell>
          <StatusCell $w={69}>
            <StatusItem $w={15}><Icon name="ortho" size={10} /></StatusItem><StatusItem $w={17}><Icon name="polar" size={10} /></StatusItem><StatusItem $w={9}><Caret $s={2.3} /></StatusItem>
            <StatusItem $w={17}><Icon name="iso" size={12} /></StatusItem><StatusItem $w={8}><Caret $s={2.3} /></StatusItem>
          </StatusCell>
          <StatusCell $w={43}>
            <StatusItem $w={16}><Icon name="track" size={11} /></StatusItem><StatusItem $w={17}><Icon name="osnap" size={12} /></StatusItem><StatusItem $w={7}><Caret $s={2.3} /></StatusItem>
          </StatusCell>
          <StatusCell $w={73}>
            <StatusItem $w={18}><Icon name="annoB" size={11} /></StatusItem><StatusItem $w={15}><Icon name="anno" size={11} /></StatusItem><StatusItem $w={15}><Icon name="anno" size={10} /></StatusItem>
            <StatusItem $w={15}>1:1</StatusItem><StatusItem $w={6}><Caret $s={2.3} /></StatusItem>
          </StatusCell>
          <StatusCell $w={27}><StatusItem $w={16}><Icon name="gear" size={9} /></StatusItem><StatusItem $w={9}><Caret $s={2.3} /></StatusItem></StatusCell>
          <StatusCell $w={17}><StatusItem $w={15}><Icon name="plus" size={11} /></StatusItem></StatusCell>
          <StatusCell $w={18}><StatusItem $w={16}><Icon name="isolate" size={12} /></StatusItem></StatusCell>
          <StatusCell $w={17}><StatusItem $w={15}><Icon name="hardware" size={12} /></StatusItem></StatusCell>
          <StatusCell $w={35}><StatusItem $w={17}><Icon name="clean" size={12} /></StatusItem><StatusItem $w={15}><Icon name="menu" size={11} /></StatusItem></StatusCell>
        </StatusRow>
      </Window>
      <Gutter />
    </Middle>

    <BackStrip>
      <svg width="190" height="5" viewBox="0 0 190 5">
        <path d="M8 0h6l5 3H8zM35 0h10v3H35zM54 0h7v3h-7zM69 0h11v3H69zM138 0h9v1h-9zM138 2h9v1h-9z" fill="#666" />
        <path d="M94 1h12M112 0v3M116 0v3M120 0v3M156 2l3-2 4 2M174 0l3 3 4-3" stroke="#777" fill="none" />
        <path d="M21 0v4M50 0v4M66 0v4M82 0v4M108 0v4M127 0v4M150 0v4M168 0v4M185 0v4" stroke="#999" />
      </svg>
      <Remnant>
        <span>100%</span>
        <svg width="20" height="4"><path d="M0 4 18 0v4z" fill="#2da52d" /></svg>
      </Remnant>
    </BackStrip>

    <Taskbar>
      <Start><Icon name="win" size={12} /></Start>
      <TaskSearch>
        <svg width="12" height="12" viewBox="0 0 12 12"><circle cx="7.300" cy="4.500" r="3.700" fill="none" stroke="#222" /><path d="M4.500 7.300.5 11.500" stroke="#222" /></svg>
        Scrivi qui per eseguire la ricerca
      </TaskSearch>
      <TaskItem $w={32}><Icon name="cortana" size={12} /></TaskItem>
      <TaskItem $w={34}><Icon name="taskview" size={12} /></TaskItem>
      <TaskItem $w={33} $bar><Icon name="explorer" size={15} /></TaskItem>
      <TaskItem $w={33} $bar><Icon name="chrome" size={15} /></TaskItem>
      <TaskItem $w={31} $bar $on><Icon name="autocad" size={16} /></TaskItem>
      <TaskItem $w={34} $bar><Icon name="obs" size={15} /></TaskItem>
      <TaskItem $w={32} $bar><Icon name="photos" size={15} /></TaskItem>
      <TaskItem $w={33} $bar><Icon name="vlc" size={14} /></TaskItem>
      <Tray>
        <TrayItem $w={20}><Icon name="chevron" size={9} /></TrayItem>
        <TrayItem $w={12}><Icon name="speaker" size={11} /></TrayItem>
        <TrayItem $w={26}><Icon name="pen" size={11} /></TrayItem>
        <TrayItem $w={19}>ITA</TrayItem>
        <TrayItem $w={54}>12:18<br />26/03/2020</TrayItem>
        <TrayItem $w={16}><Icon name="notice" size={12} /></TrayItem>
      </Tray>
    </Taskbar>
  </Desktop>
);

export default App;
